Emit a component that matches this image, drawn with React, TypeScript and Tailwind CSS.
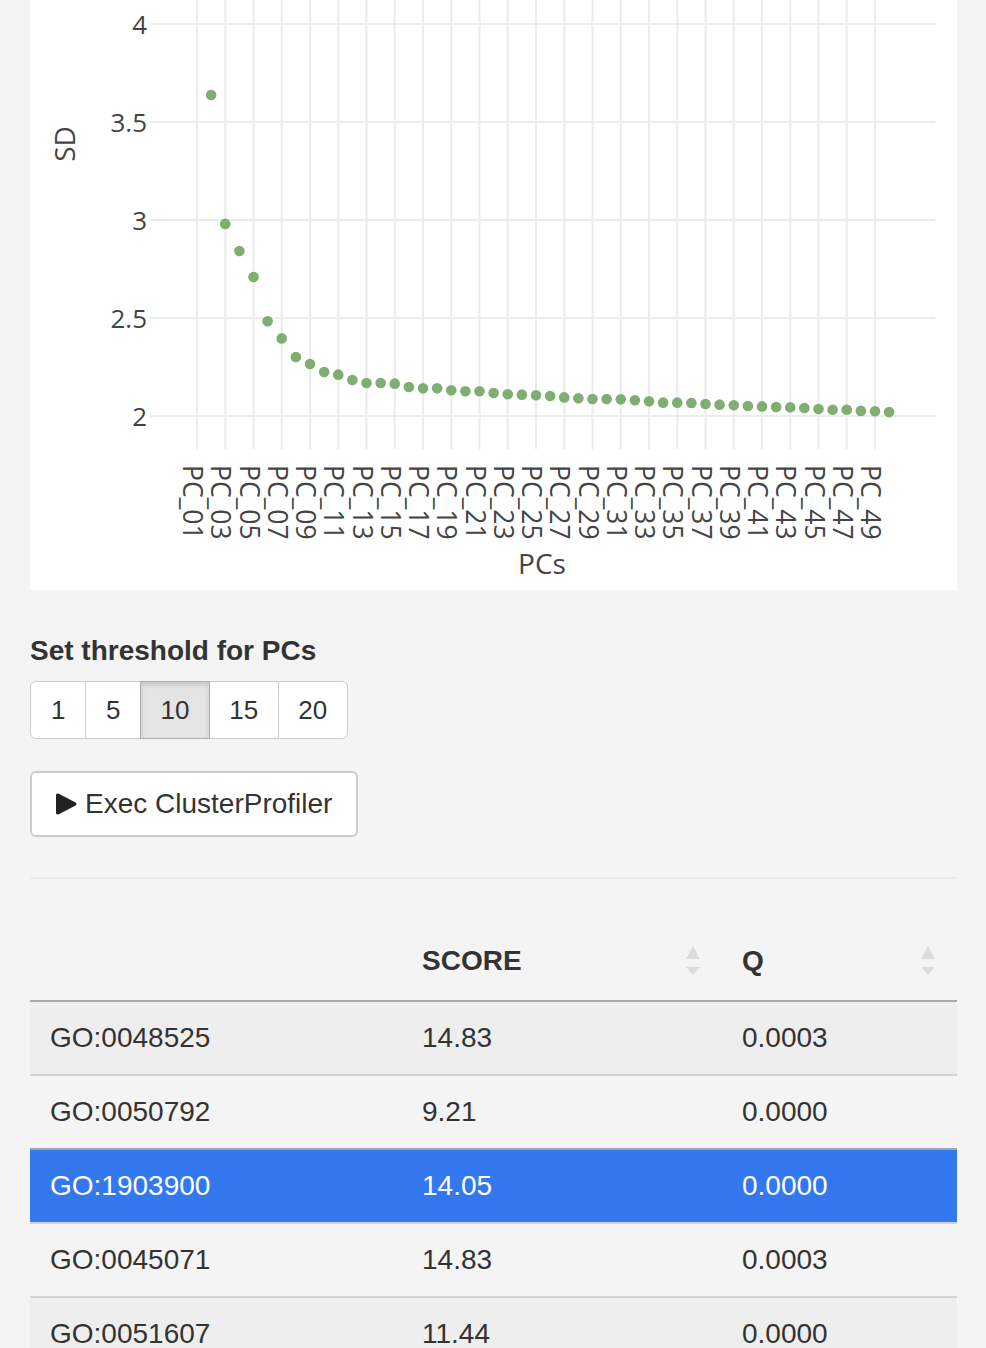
import React from "react";

const sd = [
  3.638, 2.98, 2.842, 2.709, 2.483, 2.396, 2.301, 2.265, 2.224, 2.211, 2.184,
  2.168, 2.168, 2.165, 2.148, 2.141, 2.141, 2.131, 2.126, 2.126, 2.117, 2.111,
  2.109, 2.106, 2.102, 2.095, 2.09, 2.087, 2.087, 2.085, 2.08, 2.075, 2.068,
  2.068, 2.066, 2.061, 2.058, 2.055, 2.051, 2.049, 2.046, 2.044, 2.041, 2.036,
  2.032, 2.032, 2.026, 2.024, 2.02,
];

const rows = [
  { id: "GO:0048525", score: "14.83", q: "0.0003" },
  { id: "GO:0050792", score: "9.21", q: "0.0000" },
  { id: "GO:1903900", score: "14.05", q: "0.0000", selected: true },
  { id: "GO:0045071", score: "14.83", q: "0.0003" },
  { id: "GO:0051607", score: "11.44", q: "0.0000" },
];

const X0 = 167;
const STEP = 14.125;
const yOf = (v: number) => 416 - (v - 2) * 196;

function ElbowPlot() {
  const ticks = Array.from({ length: 25 }, (_, i) => i * 2 + 1);
  const yTicks = [4, 3.5, 3, 2.5, 2];
  return (
    <div className="h-[590px] bg-white">
      <svg width="927" height="590" style={{ fontFamily: '"Open Sans", sans-serif' }}>
        {ticks.map((n) => {
          const x = X0 + (n - 1) * STEP;
          return <line key={n} x1={x} x2={x} y1={0} y2={449} stroke="#ececec" strokeWidth={2} />;
        })}
        {yTicks.map((t) => (
          <line key={t} x1={120} x2={905} y1={yOf(t)} y2={yOf(t)} stroke="#ececec" strokeWidth={2} />
        ))}
        {yTicks.map((t) => (
          <text key={t} x={117} y={yOf(t)} textAnchor="end" dominantBaseline="central" fontSize={26} fill="#444">
            {t}
          </text>
        ))}
        {ticks.map((n) => {
          const x = X0 + (n - 1) * STEP - 4;
          return (
            <text
              key={n}
              transform={`translate(${x} 465) rotate(90)`}
              dominantBaseline="central"
              fontSize={26.5}
              fill="#444"
            >
              {`PC_${String(n).padStart(2, "0")}`}
            </text>
          );
        })}
        {sd.map((v, i) => (
          <circle key={i} cx={X0 + (i + 1) * STEP} cy={yOf(v)} r={5.3} fill="#80ae72" />
        ))}
        <text transform="translate(34 144) rotate(-90)" textAnchor="middle" dominantBaseline="central" fontSize={28} fill="#444">
          SD
        </text>
        <text x={512} y={574} textAnchor="middle" fontSize={28} fill="#444">
          PCs
        </text>
      </svg>
    </div>
  );
}

function SortIcon() {
  return (
    <svg width="14" height="30" viewBox="0 0 14 30">
      <path d="M7 0 L14 13 L0 13 Z" fill="#dcdcdc" />
      <path d="M0 21 L14 21 L7 29 Z" fill="#dcdcdc" />
    </svg>
  );
}

export default function App() {
  const options = ["1", "5", "10", "15", "20"];
  return (
    <div
      className="min-h-[1348px] bg-[#f4f4f4] px-[30px] pr-[29px] text-[#333]"
      style={{ fontFamily: '"Liberation Sans", Arial, sans-serif' }}
    >
      <ElbowPlot />

      <h4 className="mt-[43px] text-[28px] font-bold leading-[36px]">Set threshold for PCs</h4>

      <div className="mt-[12px] flex h-[58px] w-fit">
        {options.map((o, i) => (
          <button
            key={o}
            type="button"
            className={
              "flex items-center justify-center border text-[26px] " +
              (i === 0 ? "rounded-l-md px-5 " : "-ml-px px-[19.5px] ") +
              (i === options.length - 1 ? "rounded-r-md " : "") +
              (o === "10"
                ? "z-10 border-[#adadad] bg-[#e4e4e4] shadow-[inset_0_3px_5px_rgba(0,0,0,0.125)]"
                : "border-[#cccccc] bg-white")
            }
          >
            {o}
          </button>
        ))}
      </div>

      <button
        type="button"
        className="mt-[32px] flex h-[66px] items-center gap-2 rounded-md border-2 border-[#cccccc] bg-white pl-[21px] pr-6 text-[28px]"
      >
        <svg width="24" height="24" viewBox="0 0 24 24">
          <path
            d="M3 3.2 C3 1.6 4.5 1 5.8 1.7 L22.6 10.6 C23.8 11.3 23.8 12.7 22.6 13.4 L5.8 22.3 C4.5 23 3 22.4 3 20.8 Z"
            fill="#222"
          />
        </svg>
        Exec ClusterProfiler
      </button>

      <div className="mt-[40px] border-t-2 border-[#ebebeb]" />

      <div className="mt-[43px] text-[28px]">
        <div className="grid h-[80px] grid-cols-[372px_320px_1fr] items-center border-b-2 border-[#a9a9a9] font-bold">
          <div />
          <div className="flex items-center justify-between pl-5 pr-[22px]">
            <span>SCORE</span>
            <SortIcon />
          </div>
          <div className="flex items-center justify-between pl-5 pr-[22px]">
            <span>Q</span>
            <SortIcon />
          </div>
        </div>
        {rows.map((r, i) => {
          const nextSelected = rows[i + 1]?.selected;
          return (
            <div
              key={r.id}
              className={
                "grid h-[74px] grid-cols-[372px_320px_1fr] items-center border-b-2 " +
                (nextSelected ? "border-[#9ca4b6] " : "border-[#d3d3d3] ") +
                (r.selected ? "bg-[#3478f0] text-white" : i % 2 === 0 ? "bg-[#eeeeee]" : "bg-[#f4f4f4]")
              }
            >
              <div className="pl-5">{r.id}</div>
              <div className="pl-5">{r.score}</div>
              <div className="pl-5">{r.q}</div>
            </div>
          );
        })}
      </div>
    </div>
  );
}
